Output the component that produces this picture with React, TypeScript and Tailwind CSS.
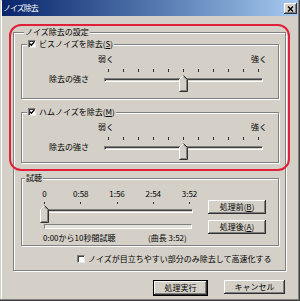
import React from "react";

const Tick = ({ h = 3 }: { h?: number }) => (
  <div className="w-[1px] bg-[#303030]" style={{ height: h }} />
);

const Thumb = ({ h }: { h: number }) => (
  <svg width="9" height={h} viewBox={`0 0 9 ${h}`}>
    <polygon points={`0.5,4.5 4.5,0.5 8.5,4.5 8.5,${h - 0.5} 0.5,${h - 0.5}`} fill="#d4d0c8" />
    <polyline points={`0.5,${h - 1} 0.5,4.5 4.5,0.5`} fill="none" stroke="#ffffff" strokeWidth="1" />
    <polyline points={`4.5,0.5 8.5,4.5 8.5,${h - 0.5} 0.5,${h - 0.5}`} fill="none" stroke="#303030" strokeWidth="1" />
    <polyline points={`4.5,1.8 7.5,4.8 7.5,${h - 1.5} 1.5,${h - 1.5}`} fill="none" stroke="#808080" strokeWidth="1" />
  </svg>
);

const Track = ({ className }: { className: string }) => (
  <div
    className={`h-[4px] border border-t-[#808080] border-l-[#808080] border-b-white border-r-white bg-[#d4d0c8] shadow-[inset_1px_1px_0_#404040] ${className}`}
  />
);

const CheckBox = ({ checked }: { checked?: boolean }) => (
  <div className="w-[8px] h-[8px] shrink-0 bg-white border border-t-[#808080] border-l-[#808080] border-b-[#e8e6e0] border-r-[#e8e6e0] shadow-[inset_1px_1px_0_#404040] flex items-center justify-center">
    {checked && (
      <svg width="6" height="6" viewBox="0 0 6 6">
        <path d="M0.8 2.6 L2.3 4.2 L5.3 1" fill="none" stroke="#000" strokeWidth="1.3" />
      </svg>
    )}
  </div>
);

const GroupBox = ({
  label,
  labelClass,
  className,
  children,
}: {
  label: React.ReactNode;
  labelClass: string;
  className: string;
  children: React.ReactNode;
}) => (
  <div className={`shrink-0 border border-[#808080] shadow-[inset_1px_1px_0_#ffffff,1px_1px_0_#ffffff] ${className}`}>
    <div className={`-mt-[6px] px-[1px] w-fit h-[10px] bg-[#d4d0c8] flex items-center whitespace-nowrap ${labelClass}`}>
      {label}
    </div>
    {children}
  </div>
);

const Button = ({ children, className }: { children: React.ReactNode; className: string }) => (
  <div
    className={`h-[14px] flex items-center justify-center bg-[#d4d0c8] shadow-[inset_-1px_-1px_0_#303030,inset_1px_1px_0_#ffffff,inset_-2px_-2px_0_#808080] whitespace-nowrap ${className}`}
  >
    {children}
  </div>
);

const NoiseSlider = () => (
  <div className="flex h-[34px]">
    <div className="w-[76px] pl-[27px] pt-[20px] whitespace-nowrap">除去の強さ</div>
    <div className="w-[170px]">
      <div className="flex justify-between h-[10px] pr-[1px]">
        <span>弱く</span>
        <span>強く</span>
      </div>
      <div className="relative h-[24px]">
        <div className="ml-[10px] w-[151px] mt-[5px] h-[3px] flex justify-between">
          {Array.from({ length: 11 }).map((_, i) => (
            <Tick key={i} />
          ))}
        </div>
        <Track className="ml-[6px] w-[159px] mt-[6px]" />
        <div className="absolute left-[81px] top-[6px] flex">
          <Thumb h={17} />
        </div>
      </div>
    </div>
  </div>
);

const times = ["0", "0:58", "1:56", "2:54", "3:52"];

export default function App() {
  return (
    <div className="relative w-[300px] h-[301px] overflow-hidden bg-[#d4d0c8] text-black text-[8px] leading-[10px] font-['Noto_Sans_CJK_JP','Noto_Sans_CJK_SC',sans-serif] shadow-[inset_-1px_-1px_0_#404040,inset_-2px_-2px_0_#808080,inset_1px_1px_0_#d4d0c8,inset_2px_2px_0_#ffffff]">
      {/* title bar */}
      <div className="mx-[2px] h-[16px] flex items-center pl-[1px] pr-[1px] bg-linear-to-r from-[#0a246a] to-[#a6caf0]">
        <span className="text-white text-[8px] tracking-[-1px]">ノイズ除去</span>
        <div className="ml-auto mt-[1px] w-[13px] h-[11px] flex items-center justify-center bg-[#d4d0c8] shadow-[inset_-1px_-1px_0_#303030,inset_1px_1px_0_#ffffff,inset_-2px_-2px_0_#808080]">
          <svg width="7" height="6" viewBox="0 0 7 6">
            <path d="M1 0.5 L6 5.5 M6 0.5 L1 5.5" stroke="#000" strokeWidth="1.4" />
          </svg>
        </div>
      </div>

      {/* main group */}
      <GroupBox
        label="ノイズ除去の設定"
        labelClass="ml-[3px]"
        className="ml-[13px] mt-[16px] w-[273px] h-[239px] pl-[7px] pr-[6px]"
      >
        <GroupBox
          label={
            <>
              <CheckBox checked />
              <span className="ml-[3px]">
                ビスノイズを除去(<u>S</u>)
              </span>
            </>
          }
          labelClass="ml-[5px]"
          className="mt-[7px] w-[258px] h-[55px]"
        >
          <div className="pt-[5px]">
            <NoiseSlider />
          </div>
        </GroupBox>

        <GroupBox
          label={
            <>
              <CheckBox checked />
              <span className="ml-[3px]">
                ハムノイズを除去(<u>M</u>)
              </span>
            </>
          }
          labelClass="ml-[5px]"
          className="mt-[13px] w-[258px] h-[51px]"
        >
          <div className="pt-[5px]">
            <NoiseSlider />
          </div>
        </GroupBox>

        <GroupBox label="試聴" labelClass="ml-[3px]" className="mt-[15px] w-[258px] h-[68px]">
          <div className="flex">
            <div className="w-[186px] pt-[6px]">
              <div className="ml-[22px] w-[146px] h-[10px] flex justify-between">
                {times.map((t) => (
                  <div key={t} className="w-[1px] flex justify-center whitespace-nowrap">
                    {t}
                  </div>
                ))}
              </div>
              <div className="relative h-[22px]">
                <div className="ml-[22px] w-[146px] mt-[3px] h-[2px] flex justify-between">
                  {times.map((t) => (
                    <Tick key={t} h={2} />
                  ))}
                </div>
                <Track className="ml-[18px] w-[153px] mt-[5px]" />
                <div className="absolute left-[18px] top-[3px] flex">
                  <Thumb h={18} />
                </div>
              </div>
              <div className="ml-[22px] w-[148px] h-[5px] bg-[#e4e2dc] border border-t-[#808080] border-l-[#808080] border-b-white border-r-white" />
              <div className="mt-[4px] h-[10px] flex whitespace-nowrap">
                <span className="ml-[21px] w-[105px]">0:00から10秒間試聴</span>
                <span>(曲長 3:52)</span>
              </div>
            </div>
            <div className="pt-[17px] flex flex-col gap-[6px]">
              <Button className="w-[58px]">
                処理前(<u>B</u>)
              </Button>
              <Button className="w-[58px]">
                処理後(<u>A</u>)
              </Button>
            </div>
          </div>
        </GroupBox>

        <div className="mt-[8px] ml-[56px] h-[10px] flex items-center gap-[3px] whitespace-nowrap">
          <CheckBox />
          <span>ノイズが目立ちやすい部分のみ除去して高速化する</span>
        </div>
      </GroupBox>

      {/* bottom buttons */}
      <div className="mt-[9px] flex justify-end gap-[16px] pr-[15px]">
        <div className="border border-black">
          <Button className="w-[53px] h-[12px]">処理実行</Button>
        </div>
        <Button className="w-[61px]">キャンセル</Button>
      </div>

      {/* red annotation */}
      <div className="absolute left-[9px] top-[24px] w-[281px] h-[147px] border-2 border-[#e0203a] rounded-[12px] pointer-events-none" />
    </div>
  );
}
